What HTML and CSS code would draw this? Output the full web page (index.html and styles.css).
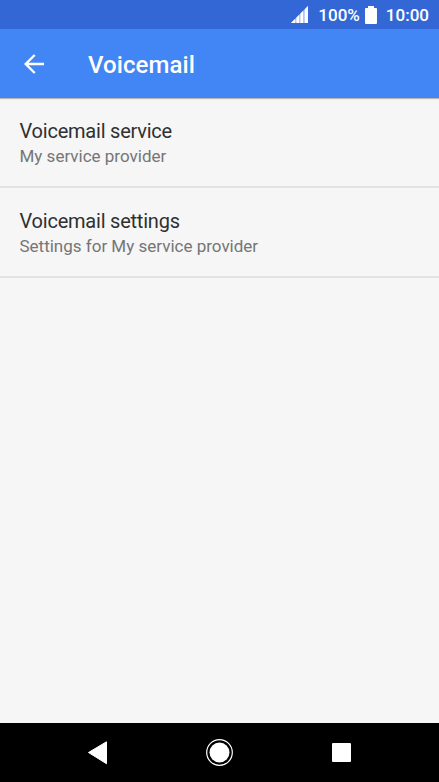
FILE: index.html
```html
<!DOCTYPE html>
<html lang="en">
<head>
<meta charset="utf-8">
<title>Voicemail</title>
<link rel="stylesheet" href="styles.css">
</head>
<body>
<div class="screen">
  <div class="status">
    <svg class="signal" width="17" height="17" viewBox="0 0 17 17"><path d="M0 17L17 0V17Z" fill="#b3c6f0"/><path d="M0 17L4 13V17ZM5.5 17V11.5L8 9V17ZM9.5 17V7.5L12 5V17ZM13.8 17V3.2L17 0V17Z" fill="#fff"/></svg>
    <span class="percent">100%</span>
    <svg class="battery" width="12" height="18" viewBox="0 0 12 18"><path d="M3 0H9V2H11Q12 2 12 3V17Q12 18 11 18H1Q0 18 0 17V3Q0 2 1 2H3Z" fill="#fff"/></svg>
    <span class="clock">10:00</span>
  </div>
  <header class="appbar">
    <svg class="back" width="20" height="20" viewBox="0 0 20 20"><path d="M20 10H2M10.7 1L1.7 10L10.7 19" fill="none" stroke="#fff" stroke-width="2.4"/></svg>
    <h1 class="title">Voicemail</h1>
  </header>
  <main class="list">
    <div class="item"><div class="name">Voicemail service</div><div class="summary">My service provider</div></div>
    <div class="item"><div class="name">Voicemail settings</div><div class="summary">Settings for My service provider</div></div>
  </main>
  <nav class="navbar">
    <svg width="439" height="59" viewBox="0 0 439 59"><g fill="#fff"><path d="M88.5 29.5L106.5 18.8V40.7Z" stroke="#fff" stroke-linejoin="round"/><circle cx="219.5" cy="29.5" r="10"/><circle cx="219.5" cy="29.5" r="12.8" fill="none" stroke="#fff" stroke-width="1.2"/><rect x="332" y="20" width="19" height="19" rx="1"/></g></svg>
  </nav>
</div>
</body>
</html>
```
FILE: styles.css
```css
body { margin: 0; font-family: Roboto, sans-serif; }
.screen { display: flex; flex-direction: column; height: 782px; background: #f6f6f6; overflow: hidden; }
.status { display: flex; align-items: center; justify-content: flex-end; height: 29px; padding: 0 10px; box-sizing: border-box; background: #3367d6; color: #fff; font-size: 17px; font-weight: 500; }
.signal { margin-right: 10px; }
.percent { margin-right: 5px; }
.battery { margin-right: 9px; }
.status span { line-height: 30px; }
.appbar { display: flex; align-items: center; height: 69px; padding-left: 24px; background: #4285f4; color: #fff; box-shadow: 0 1px 1px rgba(0, 0, 0, 0.25); }
.title { margin: 2px 0 0 44px; font-size: 24px; font-weight: 500; line-height: 32px; letter-spacing: 0.1px; }
.list { flex: 1; }
.item { height: 90px; box-sizing: border-box; padding: 20px 19.5px 0; border-bottom: 2px solid #e2e2e2; }
.name { font-size: 20px; line-height: 27px; letter-spacing: -0.22px; color: #303030; }
.summary { font-size: 17px; line-height: 23px; color: #757575; }
.navbar { height: 59px; background: #000; }
.navbar svg { display: block; }
```
